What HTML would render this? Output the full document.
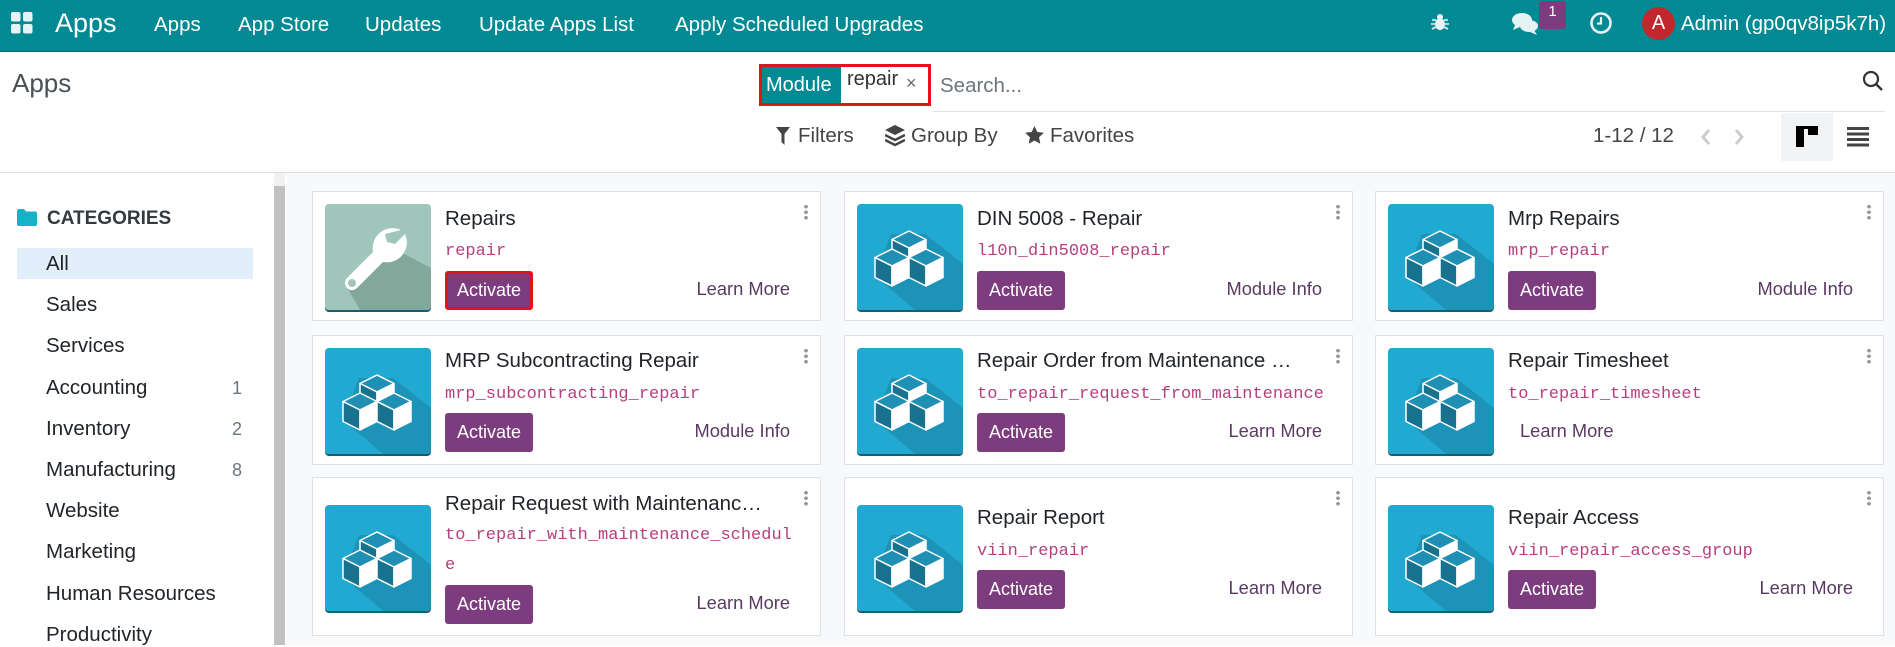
<!DOCTYPE html>
<html><head><meta charset="utf-8">
<style>
*{box-sizing:border-box;margin:0;padding:0}
body{width:1895px;height:645px;overflow:hidden;font-family:"Liberation Sans",sans-serif;background:#fff;position:relative;color:#212529}
.nav{position:absolute;left:0;top:0;width:1895px;height:52px;background:#018a94;color:#fff;border-bottom:1px solid #0a6b72}
.nav span{position:absolute;top:12px;font-size:20.5px}
.abs{position:absolute}
.side{position:absolute;left:0;top:173px;width:272px;height:472px;background:#fff}
.side .it{position:absolute;left:46px;font-size:20.5px;color:#212529}
.side .n{position:absolute;left:232px;font-size:18px;color:#6c757d}
.main{position:absolute;left:286px;top:173px;width:1609px;height:472px;background:#f8f9fa}
.card{position:absolute;background:#fff;border:1px solid #dee2e6;width:509px}
.card .ic{position:absolute;left:12px;width:106px;height:106px;border-radius:4px;overflow:hidden;box-shadow:0 2px 0 #1b5d70}
.card .t{position:absolute;left:132px;font-size:20.5px;color:#212529;white-space:nowrap}
.card .c{position:absolute;left:132px;font-family:"Liberation Mono",monospace;font-size:17px;color:#b5407e;line-height:30px;width:350px;word-break:break-all}
.card .b{position:absolute;left:132px;width:88px;height:39px;background:#7c3c7e;color:#fff;font-size:18px;text-align:center;line-height:39px;border-radius:3px}
.card .l{position:absolute;right:30px;font-size:18.3px;color:#5a3a62}
.card .d{position:absolute;right:12px;top:12px;width:4px;height:16px;background:radial-gradient(circle,#999 1.8px,transparent 2px) 0 0/4px 5.5px}
</style></head><body>
<svg width="0" height="0" style="position:absolute">
<defs>
<g id="cb"><polygon points="0,0 17,8.5 0,17 -17,8.5" fill="#1f8fb3"/><polygon points="-17,8.5 0,17 0,37 -17,28.5" fill="#17728f"/><polygon points="0,17 17,8.5 17,28.5 0,37" fill="#fff"/></g>
<symbol id="cubes" viewBox="0 0 106 106">
<rect width="106" height="106" fill="#22a9d1"/>
<polygon points="34,30 68,30 106,60 106,106 58,106 18,72" fill="#1b8db0" opacity=".8"/>
<g stroke="#fff" stroke-width="1.5" stroke-linejoin="round">
<use href="#cb" x="52" y="27"/><use href="#cb" x="35" y="45"/><use href="#cb" x="69" y="45"/>
</g>
</symbol>
</defs></svg>

<div class="nav">
<svg class="abs" style="left:10px;top:11px" width="24" height="24" viewBox="0 0 24 24"><rect x="1" y="1" width="9.5" height="9.5" rx="2" fill="#e6f3f4"/><rect x="13" y="1" width="9.5" height="9.5" rx="2" fill="#e6f3f4"/><rect x="1" y="13" width="9.5" height="9.5" rx="2" fill="#e6f3f4"/><rect x="13" y="13" width="9.5" height="9.5" rx="2" fill="#e6f3f4"/></svg>
<span style="left:55px;top:8px;font-size:27px">Apps</span>
<span style="left:154px;top:13px">Apps</span>
<span style="left:238px;top:13px">App Store</span>
<span style="left:365px;top:13px">Updates</span>
<span style="left:479px;top:13px">Update Apps List</span>
<span style="left:675px;top:13px">Apply Scheduled Upgrades</span>
<svg class="abs" style="left:1430px;top:12px" width="20" height="20" viewBox="0 0 20 20" fill="#e6f3f4"><ellipse cx="10" cy="12" rx="5" ry="6"/><circle cx="10" cy="5" r="3"/><path d="M2 8h4M14 8h4M1 12h4M15 12h4M2 17l4-2M18 17l-4-2" stroke="#e6f3f4" stroke-width="1.6"/></svg>
<svg class="abs" style="left:1512px;top:12px" width="28" height="24" viewBox="0 0 28 24" fill="#e6f3f4"><ellipse cx="10" cy="8" rx="10" ry="7"/><path d="M3 13l-2 5 7-3z"/><ellipse cx="17" cy="14" rx="9" ry="6"/><path d="M22 18l3 5-7-3z"/></svg>
<div class="abs" style="left:1539px;top:1px;width:27px;height:28px;background:#7c3c7e;border-radius:3px;font-size:15px;text-align:center;line-height:22px">1</div>
<svg class="abs" style="left:1589px;top:11px" width="24" height="24" viewBox="0 0 24 24"><circle cx="12" cy="12" r="9.5" fill="none" stroke="#e6f3f4" stroke-width="2.6"/><path d="M12 6v6.5H8" fill="none" stroke="#e6f3f4" stroke-width="2.2"/></svg>
<div class="abs" style="left:1642px;top:7px;width:33px;height:33px;border-radius:50%;background:#c1272d;font-size:20px;text-align:center;line-height:33px">A</div>
<span style="left:1681px;top:12px">Admin (gp0qv8ip5k7h)</span>
</div>

<div class="abs" style="left:12px;top:68px;font-size:26px;color:#495057">Apps</div>
<div class="abs" style="left:759px;top:64px;width:172px;height:42px;border:3px solid #e0151b"></div>
<div class="abs" style="left:762px;top:67px;width:79px;height:36px;background:#018a94;color:#fff;font-size:20px;line-height:36px;padding-left:4px">Module</div>
<div class="abs" style="left:847px;top:68px;font-size:20px;color:#333">repair</div>
<div class="abs" style="left:906px;top:73px;font-size:18px;color:#666">×</div>
<div class="abs" style="left:940px;top:74px;font-size:20.5px;color:#6c757d">Search...</div>
<svg class="abs" style="left:1862px;top:70px" width="22" height="22" viewBox="0 0 22 22"><circle cx="9" cy="9" r="7" fill="none" stroke="#333" stroke-width="2.2"/><path d="M14 14l6 6" stroke="#333" stroke-width="2.4"/></svg>
<div class="abs" style="left:933px;top:111px;width:952px;height:1px;background:#dee2e6"></div>
<svg class="abs" style="left:776px;top:127px" width="14" height="18" viewBox="0 0 14 18"><path d="M0 0h14L8.5 7v11L5.5 15V7z" fill="#444"/></svg>
<div class="abs" style="left:798px;top:124px;font-size:20.5px;color:#444">Filters</div>
<svg class="abs" style="left:885px;top:125px" width="20" height="22" viewBox="0 0 20 22"><path d="M10 0l10 5-10 5L0 5z" fill="#444"/><path d="M0 10l10 5 10-5M0 15l10 5 10-5" fill="none" stroke="#444" stroke-width="2.4"/></svg>
<div class="abs" style="left:911px;top:124px;font-size:20.5px;color:#444">Group By</div>
<svg class="abs" style="left:1025px;top:126px" width="19" height="18" viewBox="0 0 24 23"><path d="M12 0l3.6 7.6 8.4 1-6.2 5.8 1.6 8.3L12 18.6 4.6 22.7l1.6-8.3L0 8.6l8.4-1z" fill="#444"/></svg>
<div class="abs" style="left:1050px;top:124px;font-size:20.5px;color:#444">Favorites</div>
<div class="abs" style="left:1593px;top:124px;font-size:20.5px;color:#444">1-12 / 12</div>
<svg class="abs" style="left:1700px;top:128px" width="12" height="18" viewBox="0 0 12 18"><path d="M9 2L3 9l6 7" fill="none" stroke="#ccc" stroke-width="3"/></svg>
<svg class="abs" style="left:1733px;top:128px" width="12" height="18" viewBox="0 0 12 18"><path d="M3 2l6 7-6 7" fill="none" stroke="#ccc" stroke-width="3"/></svg>
<div class="abs" style="left:1781px;top:113px;width:52px;height:48px;background:#f1f3f5"></div>
<svg class="abs" style="left:1796px;top:126px" width="22" height="22" viewBox="0 0 22 22"><rect x="0" y="0" width="22" height="3" fill="#000"/><rect x="0" y="0" width="8" height="21" fill="#000"/><rect x="12" y="3" width="10" height="6" fill="#000"/></svg>
<svg class="abs" style="left:1847px;top:127px" width="22" height="20" viewBox="0 0 22 20" fill="#444"><rect y="0" width="22" height="3"/><rect y="5.5" width="22" height="3"/><rect y="11" width="22" height="3"/><rect y="16.5" width="22" height="3"/></svg>
<div class="abs" style="left:0;top:172px;width:1895px;height:1px;background:#dee2e6"></div>

<div class="side">
<svg class="abs" style="left:17px;top:36px" width="20" height="17" viewBox="0 0 20 17"><path d="M0 2a2 2 0 0 1 2-2h5l2 2.5h9a2 2 0 0 1 2 2V15a2 2 0 0 1-2 2H2a2 2 0 0 1-2-2z" fill="#17b2c7"/></svg>
<div class="abs" style="left:47px;top:35px;font-size:19px;font-weight:bold;color:#343a40">CATEGORIES</div>
<div class="abs" style="left:17px;top:75px;width:236px;height:31px;background:#e3eefb"></div>
<div class="it" style="top:79px">All</div>
<div class="it" style="top:120px">Sales</div>
<div class="it" style="top:161px">Services</div>
<div class="it" style="top:203px">Accounting</div><div class="n" style="top:205px">1</div>
<div class="it" style="top:244px">Inventory</div><div class="n" style="top:246px">2</div>
<div class="it" style="top:285px">Manufacturing</div><div class="n" style="top:287px">8</div>
<div class="it" style="top:326px">Website</div>
<div class="it" style="top:367px">Marketing</div>
<div class="it" style="top:409px">Human Resources</div>
<div class="it" style="top:450px">Productivity</div>
</div>
<div class="abs" style="left:274px;top:186px;width:11px;height:459px;background:#c1c1c1"></div>
<div class="abs" style="left:274px;top:173px;width:11px;height:13px;background:#f1f1f1"></div>

<div class="main"></div>

<!-- row 1 -->
<div class="card" style="left:312px;top:191px;height:130px">
<svg class="ic" style="top:12px" viewBox="0 0 106 106"><rect width="106" height="106" fill="#a0c5ba"/><polygon points="60,40 106,64 106,106 35,106 20,80" fill="#7a9f93" opacity=".8"/><path d="M76 26a20 20 0 0 0-28 22L22 74a7 7 0 0 0 10 10l26-26a20 20 0 0 0 22-28l-10 10-8-2-2-8z" fill="#fff"/><circle cx="27" cy="79" r="4" fill="#a0c5ba"/></svg>
<div class="t" style="top:15px">Repairs</div>
<div class="c" style="top:45px">repair</div>
<div class="b" style="top:79px;border:3px solid #e0151b;line-height:33px">Activate</div>
<div class="l" style="top:86px">Learn More</div><div class="d"></div>
</div>
<div class="card" style="left:844px;top:191px;height:130px">
<svg class="ic" style="top:12px"><use href="#cubes"/></svg>
<div class="t" style="top:15px">DIN 5008 - Repair</div>
<div class="c" style="top:45px">l10n_din5008_repair</div>
<div class="b" style="top:79px">Activate</div>
<div class="l" style="top:86px">Module Info</div><div class="d"></div>
</div>
<div class="card" style="left:1375px;top:191px;height:130px">
<svg class="ic" style="top:12px"><use href="#cubes"/></svg>
<div class="t" style="top:15px">Mrp Repairs</div>
<div class="c" style="top:45px">mrp_repair</div>
<div class="b" style="top:79px">Activate</div>
<div class="l" style="top:86px">Module Info</div><div class="d"></div>
</div>
<!-- row 2 -->
<div class="card" style="left:312px;top:335px;height:130px">
<svg class="ic" style="top:12px"><use href="#cubes"/></svg>
<div class="t" style="top:13px">MRP Subcontracting Repair</div>
<div class="c" style="top:44px">mrp_subcontracting_repair</div>
<div class="b" style="top:77px">Activate</div>
<div class="l" style="top:84px">Module Info</div><div class="d"></div>
</div>
<div class="card" style="left:844px;top:335px;height:130px">
<svg class="ic" style="top:12px"><use href="#cubes"/></svg>
<div class="t" style="top:13px">Repair Order from Maintenance …</div>
<div class="c" style="top:44px">to_repair_request_from_maintenance</div>
<div class="b" style="top:77px">Activate</div>
<div class="l" style="top:84px">Learn More</div><div class="d"></div>
</div>
<div class="card" style="left:1375px;top:335px;height:130px">
<svg class="ic" style="top:12px"><use href="#cubes"/></svg>
<div class="t" style="top:13px">Repair Timesheet</div>
<div class="c" style="top:44px">to_repair_timesheet</div>
<div class="l" style="top:84px;left:144px;right:auto">Learn More</div><div class="d"></div>
</div>
<!-- row 3 -->
<div class="card" style="left:312px;top:477px;height:159px">
<svg class="ic" style="top:27px"><use href="#cubes"/></svg>
<div class="t" style="top:14px">Repair Request with Maintenanc…</div>
<div class="c" style="top:43px">to_repair_with_maintenance_schedule</div>
<div class="b" style="top:107px">Activate</div>
<div class="l" style="top:114px">Learn More</div><div class="d"></div>
</div>
<div class="card" style="left:844px;top:477px;height:159px">
<svg class="ic" style="top:27px"><use href="#cubes"/></svg>
<div class="t" style="top:28px">Repair Report</div>
<div class="c" style="top:59px">viin_repair</div>
<div class="b" style="top:92px">Activate</div>
<div class="l" style="top:99px">Learn More</div><div class="d"></div>
</div>
<div class="card" style="left:1375px;top:477px;height:159px">
<svg class="ic" style="top:27px"><use href="#cubes"/></svg>
<div class="t" style="top:28px">Repair Access</div>
<div class="c" style="top:59px">viin_repair_access_group</div>
<div class="b" style="top:92px">Activate</div>
<div class="l" style="top:99px">Learn More</div><div class="d"></div>
</div>
</body></html>
